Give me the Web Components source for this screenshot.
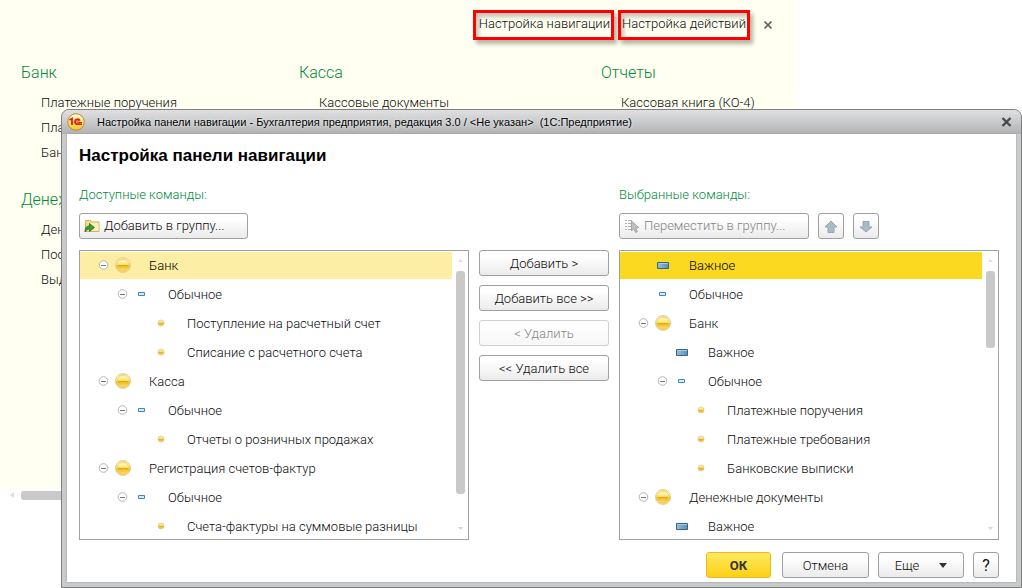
<!DOCTYPE html>
<html lang="ru">
<head>
<meta charset="utf-8">
<title>Настройка панели навигации</title>
<style>
  html, body { margin: 0; background: #fff; }
  body { font: 300 13px/16px Roboto, "Liberation Sans", sans-serif; color: #0c0c0c; --green: #008a3c; --line: #a0a0a0; }
</style>
</head>
<body>
<app-page></app-page>

<template id="app-page">
  <style>
    :host { display: block; position: relative; min-height: 100vh; overflow: hidden; }
    settings-dialog { position: absolute; top: 109px; left: 61px; right: 0; }
  </style>
  <section-panel></section-panel>
  <settings-dialog></settings-dialog>
</template>

<template id="section-panel">
  <style>
    :host { display: block; width: calc(100% - 228px); background: #fffff2; box-sizing: border-box; }
    header { display: flex; justify-content: flex-end; align-items: center; gap: 4px; padding: 10px 20px 0 0; }
    a { color: inherit; text-decoration: none; }
    header a { box-sizing: border-box; height: 30px; line-height: 22px; border: 3px solid #f00; white-space: nowrap;
      box-shadow: 3px 4px 4px rgba(90,90,70,.45), inset 3px 4px 4px rgba(90,90,70,.35); }
    .nav { padding: 0 1px 0 3px; }
    .act { padding: 0 1px; }
    .close { width: 12px; height: 12px; margin-left: 8px; padding: 2px; border: 0; background: none; display: block; }
    .close svg { display: block; }
    .cols { display: grid; grid-template-columns: 278px 302px minmax(0, 1fr); padding: 23px 0 0 21px; min-height: 447px; box-sizing: border-box; }
    .bar { display: flex; align-items: center; gap: 7px; height: 16px; margin-left: 1px; padding-left: 9px; background: #fff; }
    .thumb { height: 9px; flex: 1; border-radius: 3px; background: #c9c9c9; }
  </style>
  <header>
    <a class="nav" href="#nav">Настройка навигации</a>
    <a class="act" href="#act">Настройка действий</a>
    <button class="close" aria-label="Закрыть"><svg width="8" height="8" viewBox="0 0 8 8"><path d="M.5 .5l7 7M7.500 .5l-7 7" stroke="#666" stroke-width="1.700"/></svg></button>
  </header>
  <div class="cols">
    <div>
      <nav-group caption="Банк">
        <a href="#1">Платежные поручения</a><a href="#2">Пла</a><a href="#3">Бан</a>
      </nav-group>
      <nav-group caption="Денеж">
        <a href="#4">Ден</a><a href="#5">Пос</a><a href="#6">Выд</a>
      </nav-group>
    </div>
    <nav-group caption="Касса"><a href="#7">Кассовые документы</a></nav-group>
    <nav-group caption="Отчеты"><a href="#8">Кассовая книга (КО-4)</a></nav-group>
  </div>
  <div class="bar">
    <svg width="4" height="6" viewBox="0 0 4 6"><path d="M4 0v6L0 3z" fill="#ddd"/></svg>
    <div class="thumb"></div>
  </div>
</template>

<template id="nav-group">
  <style>
    :host { display: block; padding-bottom: 25px; }
    h2 { margin: 0 0 7px; font-size: 16px; line-height: 20px; font-weight: inherit; color: var(--green); white-space: nowrap; }
    div { display: flex; flex-direction: column; padding-left: 20px; line-height: 25px; white-space: nowrap; }
    ::slotted(a) { color: inherit; text-decoration: none; }
  </style>
  <h2></h2>
  <div><slot></slot></div>
</template>

<template id="ui-button">
  <style>
    :host { display: block; }
    button { display: flex; align-items: center; justify-content: center; gap: 4px; width: 100%; height: 26px; box-sizing: border-box;
      margin: 0; padding: 1px 4px 0; border: 1px solid var(--line); border-radius: 3px; white-space: nowrap;
      font: inherit; color: inherit; background: linear-gradient(#fff 20%, #ebebeb); }
    :host([wide]) button { justify-content: flex-start; padding-top: 0; }
    :host([primary]) button { font-weight: 700; color: #333; border-color: #efb91e; background: linear-gradient(#ffe95f, #fdd015); }
    button:disabled { color: #858585; }
    :host([faded]) button { border-color: #d0d0d0; background: linear-gradient(#fff 20%, #f6f6f6); }
  </style>
  <button><slot></slot></button>
</template>

<template id="scroll-bar">
  <style>
    :host { display: flex; flex-direction: column; width: 16px; flex: none; }
    svg { display: block; margin: 7px 0 8px 6px; flex: none; }
    .track { flex: 1; }
    .thumb { width: 9px; margin-left: 4px; border-radius: 3px; background: #c9c9c9; height: var(--thumb); }
  </style>
  <svg width="5" height="5" viewBox="0 0 5 5"><path d="M0 4L2.500 1 5 4z" fill="#ddd"/></svg>
  <div class="track"><div class="thumb"></div></div>
  <svg width="5" height="5" viewBox="0 0 5 5"><path d="M0 1L2.500 4 5 1z" fill="#d4d4d4"/></svg>
</template>

<template id="command-tree">
  <style>
    :host { display: flex; box-sizing: border-box; height: 290px; border: 1px solid var(--line); background: #fff; overflow: hidden; }
    .rows { display: flex; flex-direction: column; flex: 1; min-width: 0; overflow: hidden; }
  </style>
  <div class="rows" role="tree"><slot></slot></div>
  <scroll-bar></scroll-bar>
</template>

<template id="tree-row">
  <style>
    :host { display: flex; flex: none; align-items: center; height: 27px; margin: 1px 0; padding-left: calc(18px + 19px * var(--level)); white-space: nowrap; }
    :host([mark=soft]) { background: #fcefa5; color: #000; }
    :host([mark=full]) { background: #fbd921; color: #000; }
    .lead { width: 12px; height: 12px; flex: none; margin: 0 5px 2px 0; }
    button { display: block; padding: 0; margin: 0; border: 0; background: none; }
    svg { display: block; }
    .icon { width: 16px; height: 16px; margin: 0 18px 2px 0; flex: none; }
  </style>
  <span class="lead"></span><span class="icon"></span><slot></slot>
</template>

<template id="settings-dialog">
  <style>
    :host { display: block; box-sizing: border-box; border: 1px solid #7f7f7f; border-radius: 8px 8px 0 0; overflow: hidden;
      background: #c9cacc; padding: 0 5px 5px; }
    .title { display: flex; align-items: center; height: 24px; margin: 0 -5px; padding: 0 9px 0 5px;
      background: linear-gradient(#e0e0e1, #c9cacc 50%, #b0b1b3); color: #000; font: 11px/24px "Liberation Sans", sans-serif; white-space: pre; }
    .title svg { display: block; flex: none; }
    .title span { flex: 1; margin-left: 12px; text-shadow: 0 0 3px #fff; overflow: hidden; }
    .title button { width: 11px; height: 10px; padding: 0; border: 0; background: none; }
    main { background: #fff; padding: 10px 17px 4px 12px; box-shadow: 0 0 2px #999; }
    h1 { margin: 0 0 19px; font: 700 17px/24px "Liberation Sans", sans-serif; color: #000; }
    .grid { display: grid; grid-template-columns: minmax(0, 39fr) 130px minmax(0, 38fr); column-gap: 10px; }
    .lab { color: var(--green); margin-bottom: 10px; }
    .right { grid-column: 3; }
    .tools { display: flex; gap: 9px; margin-bottom: 11px; }
    .add { width: 169px; } .move { width: 190px; } .sq { width: 26px; }
    .mid { display: flex; flex-direction: column; gap: 9px; }
    footer { display: flex; justify-content: flex-end; gap: 9px; margin-top: 12px; }
    .ok { width: 65px; margin-right: 2px; } .cancel { width: 87px; } .more { width: 86px; }
    .more svg { margin: 0 0 0 16px; }
    .q { font-size: 16px; font-weight: 400; }
  </style>
  <div class="title"><svg width="18" height="18" viewBox="0 0 18 18">
      <defs><linearGradient id="lg" x2="0" y2="1"><stop offset="0" stop-color="#fffbe0"/><stop offset=".5" stop-color="#ffe873"/><stop offset="1" stop-color="#fbc31c"/></linearGradient></defs>
      <circle cx="9" cy="9" r="8.300" fill="url(#lg)" stroke="#b98a3c"/>
      <path d="M2.500 7l2.500-1.500V12M12.800 7.600C12 5.700 8 5.700 8 8.700c0 2.200 1.600 2.500 3 2.500h4" fill="none" stroke="#e0201b" stroke-width="1.800"/>
      <path d="M12.500 8.200c-1.500-1-2.700-.3-2.500 .6 .1 .6.800.7 1.500.7h3.500" fill="none" stroke="#e0201b"/></svg><span>Настройка панели навигации - Бухгалтерия предприятия, редакция 3.0 / &lt;Не указан&gt;  (1С:Предприятие)</span><button aria-label="Закрыть"><svg width="11" height="10" viewBox="0 0 11 10"><path d="M1.500 1l8 8M9.500 1l-8 8" stroke="#4a4a4a" stroke-width="2.400"/></svg></button></div>
  <main>
    <h1>Настройка панели навигации</h1>
    <div class="grid">
      <div class="lab">Доступные команды:</div>
      <div class="lab right">Выбранные команды:</div>
      <div class="tools">
        <ui-button class="add" wide><svg width="16" height="16" viewBox="0 0 16 16"><path d="M1.500 2.500h5l1 1.500h7.500v9.500H1.500z" fill="#f4dc8c" stroke="#d2b062"/><path d="M6 5h8.500v8H6z" fill="#fbedb8"/><path d="M1 14c0-5 2-6 4.500-6V5.500L10.500 9.500 5.500 13.500V11C3.500 11 2.200 12 1 14z" fill="#3f9c2f" stroke="#276e20" stroke-width=".8"/></svg>Добавить в группу...</ui-button>
      </div>
      <div class="tools right">
        <ui-button class="move" wide disabled><svg width="16" height="16" viewBox="0 0 16 16"><path d="M1 2.500h2M4 2.500h4M1 5.500h2M4 5.500h3M1 8.500h2M4 8.500h3M1 11.500h2M4 11.500h3" stroke="#b0b0b0"/><path d="M7.500 3v10l2.300-2.300 1.700 3.800 1.900-.9-1.700-3.600 3-.4z" fill="#c0c0c0" stroke="#999" stroke-width=".8"/></svg>Переместить в группу...</ui-button>
        <ui-button class="sq" disabled label="Вверх"><svg width="14" height="14" viewBox="0 0 14 14"><path d="M7 1l6 6h-3v5.500H4V7H1z" fill="#a9bcc6" stroke="#93a7b2"/></svg></ui-button>
        <ui-button class="sq" disabled label="Вниз"><svg width="14" height="14" viewBox="0 0 14 14"><path d="M7 12l6-5h-3V1.500H4V7H1z" fill="#a9bcc6" stroke="#93a7b2"/></svg></ui-button>
      </div>
      <command-tree style="--thumb: 90%" aria-label="Доступные команды">
        <tree-row level="0" icon="ball" open mark="soft">Банк</tree-row>
        <tree-row level="1" icon="small" open>Обычное</tree-row>
        <tree-row level="2" icon="dot">Поступление на расчетный счет</tree-row>
        <tree-row level="2" icon="dot">Списание с расчетного счета</tree-row>
        <tree-row level="0" icon="ball" open>Касса</tree-row>
        <tree-row level="1" icon="small" open>Обычное</tree-row>
        <tree-row level="2" icon="dot">Отчеты о розничных продажах</tree-row>
        <tree-row level="0" icon="ball" open>Регистрация счетов-фактур</tree-row>
        <tree-row level="1" icon="small" open>Обычное</tree-row>
        <tree-row level="2" icon="dot">Счета-фактуры на суммовые разницы</tree-row>
      </command-tree>
      <div class="mid">
        <ui-button>Добавить &gt;</ui-button>
        <ui-button>Добавить все &gt;&gt;</ui-button>
        <ui-button disabled faded>&lt; Удалить</ui-button>
        <ui-button>&lt;&lt; Удалить все</ui-button>
      </div>
      <command-tree style="--thumb: 31%" aria-label="Выбранные команды">
        <tree-row level="0" icon="bar" mark="full">Важное</tree-row>
        <tree-row level="0" icon="small">Обычное</tree-row>
        <tree-row level="0" icon="ball" open>Банк</tree-row>
        <tree-row level="1" icon="bar">Важное</tree-row>
        <tree-row level="1" icon="small" open>Обычное</tree-row>
        <tree-row level="2" icon="dot">Платежные поручения</tree-row>
        <tree-row level="2" icon="dot">Платежные требования</tree-row>
        <tree-row level="2" icon="dot">Банковские выписки</tree-row>
        <tree-row level="0" icon="ball" open>Денежные документы</tree-row>
        <tree-row level="1" icon="bar">Важное</tree-row>
      </command-tree>
    </div>
    <footer>
      <ui-button class="ok" primary>ОК</ui-button>
      <ui-button class="cancel">Отмена</ui-button>
      <ui-button class="more">Еще<svg width="8" height="5" viewBox="0 0 8 5"><path d="M0 0h8L4 5z" fill="#333"/></svg></ui-button>
      <ui-button class="sq q">?</ui-button>
    </footer>
  </main>
</template>

<script>
  class Base extends HTMLElement {
    constructor() {
      super();
      this.attachShadow({ mode: 'open' }).append(
        document.getElementById(this.localName).content.cloneNode(true));
    }
  }
  const icons = {
    ball: `<svg width="16" height="16" viewBox="0 0 16 16"><defs><linearGradient id="b" x2="0" y2="1"><stop offset="0" stop-color="#f6e07a"/><stop offset=".25" stop-color="#fff6c4"/><stop offset=".5" stop-color="#fbdf55"/><stop offset=".55" stop-color="#ecb616"/><stop offset=".8" stop-color="#f9d660"/><stop offset="1" stop-color="#f3cf7c"/></linearGradient></defs><circle cx="8" cy="8" r="7.500" fill="url(#b)" stroke="#e6cf98"/><circle cx="8" cy="8" r="5.800" fill="none" stroke="#efcd58" stroke-opacity=".7"/><path d="M3 8.500h10" stroke="#e2a90d"/></svg>`,
    dot: `<svg width="16" height="16" viewBox="0 0 16 16"><defs><linearGradient id="d" x2="0" y2="1"><stop offset="0" stop-color="#fff5bd"/><stop offset=".4" stop-color="#fbe27a"/><stop offset=".55" stop-color="#e9b01a"/><stop offset="1" stop-color="#f8d878"/></linearGradient></defs><circle cx="8" cy="8" r="3" fill="url(#d)" stroke="#e0c690" stroke-width=".7"/></svg>`,
    small: `<svg width="16" height="16" viewBox="0 0 16 16"><path d="M4.500 6.500h6v3h-6z" fill="#d4ecfa" stroke="#3f87b8"/></svg>`,
    bar: `<svg width="16" height="16" viewBox="0 0 16 16"><defs><linearGradient id="r"><stop offset="0" stop-color="#9cc0d8"/><stop offset="1" stop-color="#5b8fb3"/></linearGradient></defs><path d="M2.500 5.500h11v6h-11z" fill="url(#r)" stroke="#33658a"/><path d="M3 6.500h10" stroke="#a9cbe0"/></svg>`
  };
  const minus = `<svg width="12" height="12" viewBox="0 0 12 12"><circle cx="5.500" cy="6" r="4.300" fill="#fff" stroke="#b4b4b4"/><path d="M3 6.500h5" stroke="#777"/></svg>`;

  customElements.define('nav-group', class extends Base {
    connectedCallback() { this.shadowRoot.querySelector('h2').textContent = this.getAttribute('caption'); }
  });
  customElements.define('ui-button', class extends Base {
    connectedCallback() {
      const b = this.shadowRoot.querySelector('button');
      b.disabled = this.hasAttribute('disabled');
      if (this.hasAttribute('label')) b.setAttribute('aria-label', this.getAttribute('label'));
    }
  });
  customElements.define('scroll-bar', class extends Base {});
  customElements.define('tree-row', class extends Base {
    connectedCallback() {
      this.setAttribute('role', 'treeitem');
      this.style.setProperty('--level', this.getAttribute('level'));
      if (this.hasAttribute('open'))
        this.shadowRoot.querySelector('.lead').innerHTML = `<button aria-label="Свернуть">${minus}</button>`;
      this.shadowRoot.querySelector('.icon').innerHTML = icons[this.getAttribute('icon')];
    }
  });
  customElements.define('command-tree', class extends Base {});
  customElements.define('section-panel', class extends Base {});
  customElements.define('settings-dialog', class extends Base {});
  customElements.define('app-page', class extends Base {});
</script>
</body>
</html>
